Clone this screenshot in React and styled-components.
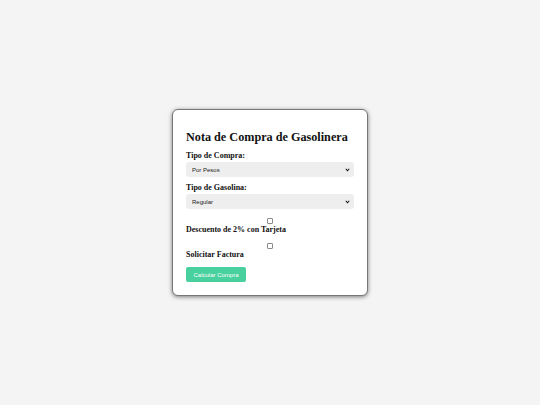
import React from "react";
import styled, { createGlobalStyle } from "styled-components";

const GlobalStyle = createGlobalStyle`
  html, body {
    margin: 0;
    padding: 0;
    background-color: #f4f4f4;
  }
`;

const Page = styled.div`
  width: 540px;
  height: 405px;
  display: flex;
  justify-content: center;
  align-items: center;
  background-color: #f4f4f4;
`;

const Card = styled.form`
  width: 168px;
  padding: 13px;
  background-color: #fff;
  border: 1px solid #777;
  border-radius: 6px;
  box-shadow: 0 1px 4px rgba(0, 0, 0, 0.5);
  display: flex;
  flex-direction: column;
  font-family: "Liberation Serif", "Times New Roman", serif;
  color: #111;
`;

const Title = styled.h2`
  margin: 7px 0 7px;
  font-size: 12.2px;
  line-height: 14px;
  font-weight: bold;
`;

const Label = styled.label`
  display: block;
  font-size: 8px;
  line-height: 10px;
  font-weight: bold;
  margin-bottom: ${(p) => p.$mb || 0}px;
`;

const SelectWrap = styled.div`
  position: relative;
  height: 15px;
  margin-bottom: ${(p) => p.$mb || 0}px;
`;

const Select = styled.select`
  appearance: none;
  display: block;
  width: 100%;
  height: 15px;
  margin: 0;
  padding: 0 6px;
  border: none;
  border-radius: 3px;
  background-color: #eeeeee;
  font-family: "Liberation Sans", Arial, sans-serif;
  font-size: 6px;
  color: #222;
  outline: none;
`;

const Arrow = styled.svg`
  position: absolute;
  right: 4px;
  top: 6px;
  width: 5px;
  height: 4px;
  pointer-events: none;
`;

const Check = styled.input`
  appearance: none;
  display: block;
  width: 6px;
  height: 6px;
  margin: ${(p) => p.$mt || 0}px auto 1px;
  border: 0.6px solid #8a8a8a;
  border-radius: 1px;
  background: #fff;
  box-sizing: border-box;
`;

const Button = styled.button`
  align-self: flex-start;
  margin-top: 7px;
  height: 15px;
  width: 60px;
  padding: 0;
  border: none;
  border-radius: 2px;
  background-color: #48d09e;
  color: #fff;
  font-family: "Liberation Sans", Arial, sans-serif;
  font-size: 6px;
  cursor: pointer;
`;

const Chevron = () => (
  <Arrow viewBox="0 0 10 8">
    <path d="M1.5 1.5 L5 5.5 L8.5 1.5" fill="none" stroke="#111" strokeWidth="2.2" />
  </Arrow>
);

export default function App() {
  return (
    <Page>
      <GlobalStyle />
      <Card onSubmit={(e) => e.preventDefault()}>
        <Title>Nota de Compra de Gasolinera</Title>
        <Label $mb={1}>Tipo de Compra:</Label>
        <SelectWrap $mb={6}>
          <Select defaultValue="pesos">
            <option value="pesos">Por Pesos</option>
            <option value="litros">Por Litros</option>
          </Select>
          <Chevron />
        </SelectWrap>
        <Label $mb={1}>Tipo de Gasolina:</Label>
        <SelectWrap>
          <Select defaultValue="regular">
            <option value="regular">Regular</option>
            <option value="premium">Premium</option>
            <option value="diesel">Diesel</option>
          </Select>
          <Chevron />
        </SelectWrap>
        <Check type="checkbox" $mt={9} />
        <Label>Descuento de 2% con Tarjeta</Label>
        <Check type="checkbox" $mt={8} />
        <Label>Solicitar Factura</Label>
        <Button type="submit">Calcular Compra</Button>
      </Card>
    </Page>
  );
}
